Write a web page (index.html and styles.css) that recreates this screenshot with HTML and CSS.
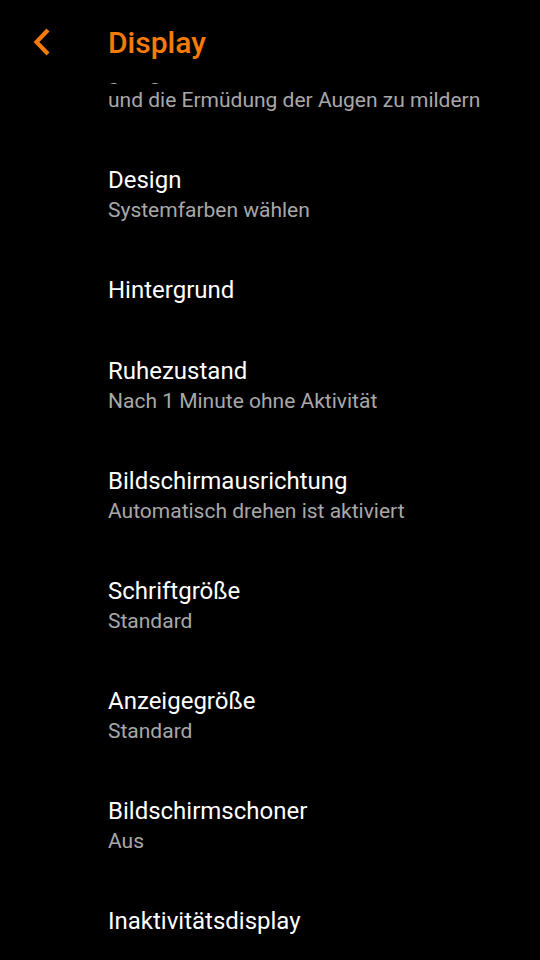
FILE: index.html
```html
<!DOCTYPE html>
<html lang="de">
<head>
<meta charset="utf-8">
<title>Display</title>
<link rel="stylesheet" href="styles.css">
</head>
<body>
<div class="screen">
  <header class="appbar">
    <button class="back" aria-label="Zurück">
      <svg width="24" height="32" viewBox="0 0 24 32"><path d="M17 4 L5.5 16 L17 28" fill="none" stroke="#f47b06" stroke-width="4.2" stroke-linecap="butt" stroke-linejoin="miter"/></svg>
    </button>
    <h1 class="title">Display</h1>
  </header>
  <main class="viewport">
    <ul class="list">
      <li class="item">
        <span class="item-title">Augenkomfort</span>
        <span class="item-summary">Bildschirmfarben werden wärmer gestellt,<br>um blaues Licht zu reduzieren, das<br>geregelt, um den Bildschirm besser zu lesen<br>und die Ermüdung der Augen zu mildern</span>
      </li>
      <li class="item">
        <span class="item-title">Design</span>
        <span class="item-summary">Systemfarben wählen</span>
      </li>
      <li class="item single">
        <span class="item-title">Hintergrund</span>
      </li>
      <li class="item">
        <span class="item-title">Ruhezustand</span>
        <span class="item-summary">Nach 1 Minute ohne Aktivität</span>
      </li>
      <li class="item">
        <span class="item-title">Bildschirmausrichtung</span>
        <span class="item-summary">Automatisch drehen ist aktiviert</span>
      </li>
      <li class="item">
        <span class="item-title">Schriftgröße</span>
        <span class="item-summary">Standard</span>
      </li>
      <li class="item">
        <span class="item-title">Anzeigegröße</span>
        <span class="item-summary">Standard</span>
      </li>
      <li class="item">
        <span class="item-title">Bildschirmschoner</span>
        <span class="item-summary">Aus</span>
      </li>
      <li class="item single">
        <span class="item-title">Inaktivitätsdisplay</span>
      </li>
    </ul>
  </main>
</div>
</body>
</html>
```

FILE: styles.css
```css
html, body {
  margin: 0;
  padding: 0;
  background: #000;
}
body {
  font-family: Roboto, "Noto Sans", sans-serif;
  color: #fff;
}
.screen {
  width: 540px;
  height: 960px;
  display: flex;
  flex-direction: column;
  overflow: hidden;
  background: #000;
}
.appbar {
  height: 83px;
  flex: none;
  display: flex;
  align-items: center;
  background: #000;
}
.back {
  width: 108px;
  height: 83px;
  padding: 0 0 0 31px;
  margin: 0;
  border: 0;
  background: transparent;
  display: flex;
  align-items: center;
  justify-content: flex-start;
}
.back svg {
  display: block;
}
.title {
  margin: 0;
  font-size: 30px;
  font-weight: 500;
  color: #f47b06;
  line-height: 36px;
  padding-top: 2px;
}
.viewport {
  flex: 1;
  overflow: hidden;
}
.list {
  list-style: none;
  margin: -134px 0 0 0;
  padding: 0;
}
.item {
  display: flex;
  flex-direction: column;
  justify-content: center;
  padding: 26px 24px 26px 108px;
}
.item.single {
  padding-bottom: 27px;
}
.item-title {
  font-size: 24px;
  line-height: 28px;
  color: #fff;
  white-space: nowrap;
}
.item-summary {
  margin-top: 3px;
  font-size: 21px;
  line-height: 27px;
  color: #a8a8a8;
  white-space: nowrap;
}
```
